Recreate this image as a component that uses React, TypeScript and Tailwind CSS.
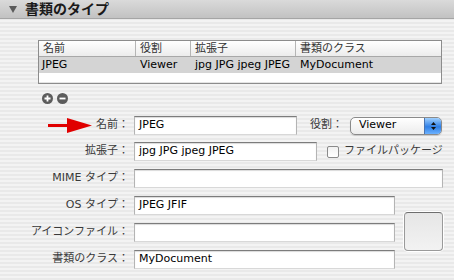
import React from "react";

const font = "font-['DejaVu_Sans','Noto_Sans_CJK_JP',sans-serif]";

function Field({ w, value }: { w: string; value?: string }) {
  return (
    <div
      className={`${w} h-[19px] bg-white border border-[#b4b4b4] border-t-[#7c7c7c] border-b-[#d8d8d8] shadow-[inset_0_1px_1px_rgba(0,0,0,0.15)] flex items-center pl-[4px] text-[11px] text-black`}
    >
      {value}
    </div>
  );
}

function Label({ text }: { text: string }) {
  return <div className="w-[129px] text-right text-[11px] text-[#3a3a3a]">{text}</div>;
}

export default function App() {
  return (
    <div
      className={`w-[454px] h-[280px] overflow-hidden ${font} bg-[image:repeating-linear-gradient(180deg,#f3f3f3_0px,#f3f3f3_2px,#e9e9e9_2px,#e9e9e9_4px)]`}
    >
      {/* Section header */}
      <div className="h-[19px] flex items-center bg-[linear-gradient(#dadada,#c2c2c2)] border-b border-[#a5a5a5]">
        <svg width="8" height="7" viewBox="0 0 8 7" className="ml-[9px] mt-[1px]">
          <polygon points="0,0 8,0 4,7" fill="#5a5a5a" />
        </svg>
        <span className="ml-[8px] text-[14px] font-bold text-[#1a1a1a]">書類のタイプ</span>
      </div>

      {/* Table */}
      <div className="pt-[21px] pl-[38px] pr-[12px]">
        <div className="h-[44px] border border-[#8c8c8c] bg-white text-[11px]">
          <div className="flex h-[16px] bg-[linear-gradient(#ffffff,#ececec)] border-b border-[#a8a8a8] text-[#333]">
            <div className="w-[97px] pl-[4px] leading-[15px] border-r border-[#b5b5b5]">名前</div>
            <div className="w-[55px] pl-[4px] leading-[15px] border-r border-[#b5b5b5]">役割</div>
            <div className="w-[105px] pl-[4px] leading-[15px] border-r border-[#b5b5b5]">拡張子</div>
            <div className="flex-1 pl-[4px] leading-[15px]">書類のクラス</div>
          </div>
          <div className="flex h-[16px] bg-[#d4d4d4] text-black leading-[16px]">
            <div className="w-[98px] pl-[3px]">JPEG</div>
            <div className="w-[55px] pl-[3px]">Viewer</div>
            <div className="w-[105px] pl-[3px]">jpg JPG jpeg JPEG</div>
            <div className="flex-1 pl-[3px]">MyDocument</div>
          </div>
          <div className="h-[10px] border-b border-[#e4e4e4]" />
        </div>

        {/* Add / remove */}
        <div className="flex gap-[4px] mt-[9px] ml-[4px]">
          <div className="w-[11px] h-[11px] rounded-full bg-[#5c5c5c] flex items-center justify-center">
            <svg width="7" height="7" viewBox="0 0 7 7">
              <path d="M3.5 0.5v6M0.5 3.5h6" stroke="white" strokeWidth="1.8" />
            </svg>
          </div>
          <div className="w-[11px] h-[11px] rounded-full bg-[#5c5c5c] flex items-center justify-center">
            <svg width="7" height="7" viewBox="0 0 7 7">
              <path d="M0.5 3.5h6" stroke="white" strokeWidth="1.8" />
            </svg>
          </div>
        </div>
      </div>

      {/* Form */}
      <div className="mt-[12px] flex flex-col">
        <div className="flex items-center h-[19px]">
          <div className="w-[129px] flex items-center justify-end text-[11px] text-[#3a3a3a]">
            <svg width="44" height="15" viewBox="0 0 44 15" className="mr-[4px]">
              <rect x="0" y="6" width="22" height="3" fill="#e00000" />
              <polygon points="19,0 44,7.5 19,15" fill="#e00000" />
            </svg>
            名前：
          </div>
          <div className="ml-[5px]">
            <Field w="w-[163px]" value="JPEG" />
          </div>
          <div className="ml-[13px] text-[11px] text-[#3a3a3a]">役割：</div>
          <div className="ml-[7px] w-[92px] h-[18px] rounded-[5px] border border-[#8a8a8a] bg-[linear-gradient(#ffffff,#ececec)] flex items-center overflow-hidden shadow-[0_1px_1px_rgba(0,0,0,0.15)]">
            <span className="flex-1 pl-[8px] text-[11px] text-black">Viewer</span>
            <div className="w-[17px] h-full bg-[linear-gradient(#9fd0ff,#2f7fe6_55%,#6cb2ff)] border-l border-[#4a74b0] flex flex-col items-center justify-center gap-[2px]">
              <svg width="5" height="3" viewBox="0 0 5 3">
                <polygon points="0,3 2.5,0 5,3" fill="#111" />
              </svg>
              <svg width="5" height="3" viewBox="0 0 5 3">
                <polygon points="0,0 2.5,3 5,0" fill="#111" />
              </svg>
            </div>
          </div>
        </div>

        <div className="flex items-center h-[19px] mt-[7px]">
          <Label text="拡張子：" />
          <div className="ml-[5px]">
            <Field w="w-[183px]" value="jpg JPG jpeg JPEG" />
          </div>
          <div className="ml-[10px] w-[12px] h-[12px] rounded-[2px] border border-[#8a8a8a] bg-[linear-gradient(#f0f0f0,#ffffff)]" />
          <span className="ml-[5px] text-[11px] text-[#3a3a3a]">ファイルパッケージ</span>
        </div>

        <div className="flex items-center h-[19px] mt-[8px]">
          <Label text="MIME タイプ：" />
          <div className="ml-[5px]">
            <Field w="w-[309px]" />
          </div>
        </div>

        <div className="flex mt-[8px]">
          <div className="flex flex-col gap-[8px]">
            <div className="flex items-center h-[19px]">
              <Label text="OS タイプ：" />
              <div className="ml-[5px]">
                <Field w="w-[261px]" value="JPEG JFIF" />
              </div>
            </div>
            <div className="flex items-center h-[19px]">
              <Label text="アイコンファイル：" />
              <div className="ml-[5px]">
                <Field w="w-[261px]" />
              </div>
            </div>
            <div className="flex items-center h-[19px]">
              <Label text="書類のクラス：" />
              <div className="ml-[5px]">
                <Field w="w-[261px]" value="MyDocument" />
              </div>
            </div>
          </div>
          <div className="ml-[8px] mt-[15px] w-[41px] h-[41px] rounded-[5px] bg-white p-[1px]">
            <div className="w-full h-full rounded-[4px] border border-[#9a9a9a] border-t-[#6e6e6e] bg-[linear-gradient(#e6e6e6,#f2f2f2)]" />
          </div>
        </div>
      </div>
    </div>
  );
}
